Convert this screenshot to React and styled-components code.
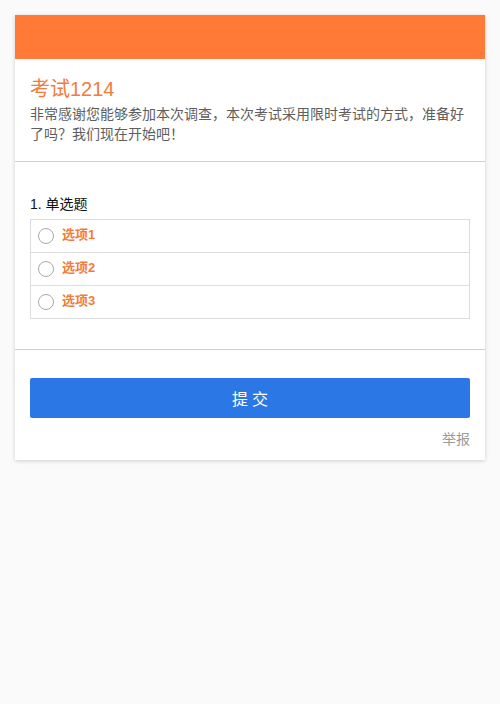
import React from "react";
import styled, { createGlobalStyle } from "styled-components";

const Global = createGlobalStyle`
  html, body { margin: 0; padding: 0; background: #fafafa; }
  body { font-family: "Liberation Sans", "Noto Sans CJK SC", sans-serif; }
`;

const Page = styled.div`
  padding: 15px;
`;

const Card = styled.div`
  background: #fff;
  box-shadow: 0 1px 4px rgba(0, 0, 0, 0.18);
`;

const Banner = styled.div`
  height: 44px;
  background: #ff7a36;
`;

const Intro = styled.div`
  padding: 15px 15px 17px;
  border-bottom: 1px solid #cfcfcf;
`;

const Title = styled.h1`
  margin: 0;
  font-size: 20px;
  line-height: 30px;
  font-weight: normal;
  color: #f37b3b;
`;

const Desc = styled.p`
  margin: 0;
  font-size: 14px;
  line-height: 20px;
  color: #5e5e5e;
`;

const Question = styled.div`
  padding: 32px 15px 30px;
  border-bottom: 1px solid #cfcfcf;
`;

const QTitle = styled.div`
  font-size: 14px;
  line-height: 20px;
  color: #111;
  margin-bottom: 5px;
`;

const Options = styled.div`
  border: 1px solid #ddd;
  border-bottom: none;
`;

const Option = styled.label`
  display: flex;
  align-items: center;
  height: 32px;
  border-bottom: 1px solid #ddd;
  padding: 0 0 2px 7px;
  box-sizing: border-box;
  height: 33px;
  cursor: pointer;
`;

const Radio = styled.span`
  width: 16px;
  height: 16px;
  border: 1px solid #aaa;
  border-radius: 50%;
  margin: 2px 8px 0 0;
  box-sizing: border-box;
`;

const OptText = styled.span`
  font-size: 13px;
  line-height: 18px;
  font-weight: bold;
  color: #f37b3b;
`;

const Footer = styled.div`
  padding: 28px 15px 11px;
  display: flex;
  flex-direction: column;
`;

const Submit = styled.button`
  height: 40px;
  border: none;
  border-radius: 2px;
  background: #2a77e5;
  color: #fff;
  font-family: inherit;
  font-size: 16px;
  letter-spacing: 4px;
  padding: 0 0 0 4px;
`;

const Report = styled.a`
  align-self: flex-end;
  margin-top: 11px;
  font-size: 14px;
  line-height: 20px;
  color: #999;
`;

export default function App() {
  return (
    <Page>
      <Global />
      <Card>
        <Banner />
        <Intro>
          <Title>考试1214</Title>
          <Desc>非常感谢您能够参加本次调查，本次考试采用限时考试的方式，准备好了吗？我们现在开始吧！</Desc>
        </Intro>
        <Question>
          <QTitle>1. 单选题</QTitle>
          <Options>
            {["选项1", "选项2", "选项3"].map((o) => (
              <Option key={o}>
                <Radio />
                <OptText>{o}</OptText>
              </Option>
            ))}
          </Options>
        </Question>
        <Footer>
          <Submit>提交</Submit>
          <Report>举报</Report>
        </Footer>
      </Card>
    </Page>
  );
}
